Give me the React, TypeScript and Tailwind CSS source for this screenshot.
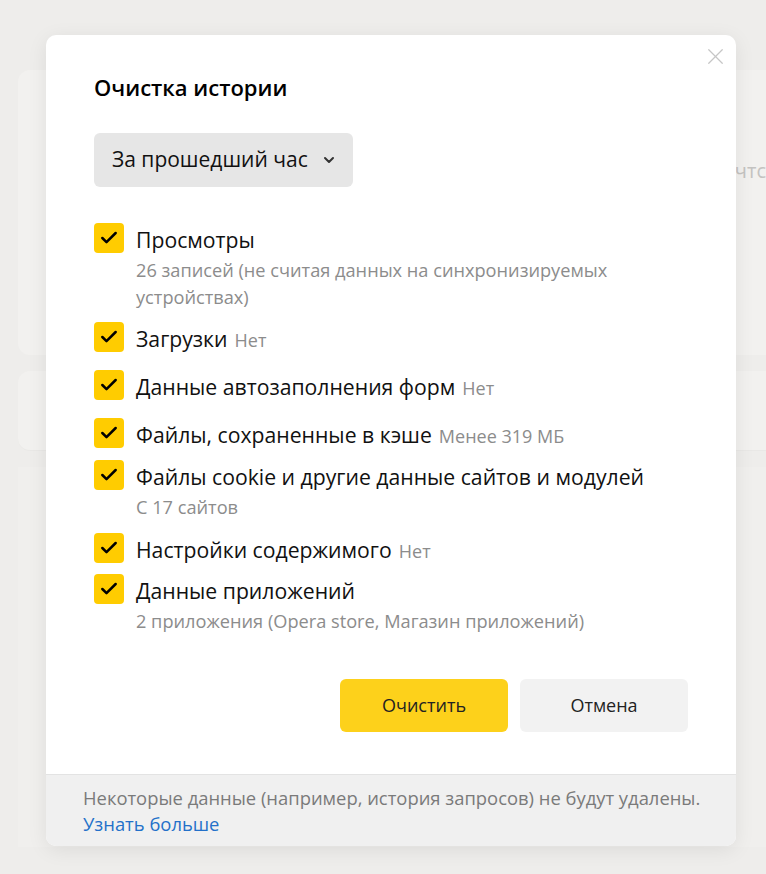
import { Check, ChevronDown, X } from "lucide-react";

type Item = { label: string; note?: string; sub?: string; gap: string };

const items: Item[] = [
  { label: "Просмотры", sub: "26 записей (не считая данных на синхронизируемых устройствах)", gap: "mt-0" },
  { label: "Загрузки", note: "Нет", gap: "mt-[11px]" },
  { label: "Данные автозаполнения форм", note: "Нет", gap: "mt-[18px]" },
  { label: "Файлы, сохраненные в кэше", note: "Менее 319 МБ", gap: "mt-[18px]" },
  { label: "Файлы cookie и другие данные сайтов и модулей", sub: "С 17 сайтов", gap: "mt-[12px]" },
  { label: "Настройки содержимого", note: "Нет", gap: "mt-[12px]" },
  { label: "Данные приложений", sub: "2 приложения (Opera store, Магазин приложений)", gap: "mt-[11px]" },
];

function Row({ item }: { item: Item }) {
  return (
    <li className={item.gap}>
      <div className="flex h-[30px] items-center gap-3">
        <span className="flex h-[30px] w-[30px] shrink-0 items-center justify-center rounded-[4px] bg-[#fc0]">
          <Check size={20} strokeWidth={3} className="text-black" />
        </span>
        <span className="pt-[3px] text-[21.2px] text-[#111]">
          {item.label}
          {item.note && <span className="ml-[7px] text-[18px] text-[#8c8c8c]">{item.note}</span>}
        </span>
      </div>
      {item.sub && (
        <p className="mt-1 pl-[42px] pr-[60px] text-[18.2px] leading-[27px] text-[#8c8c8c]">{item.sub}</p>
      )}
    </li>
  );
}

export default function App() {
  return (
    <div className="relative h-[874px] w-[766px] overflow-hidden bg-[#eeedeb] font-['Open_Sans','Noto_Sans',sans-serif]">
      {/* dimmed settings page behind the dialog */}
      <div className="flex flex-col gap-4 pl-[18px] pt-[70px]">
        <div className="flex h-[285px] rounded-l-xl bg-[#f2f1ef]">
          <div className="flex-1" />
          <span className="mt-[86px] text-[20px] text-[#c4c3c1]">чтс</span>
        </div>
        <div className="h-[80px] rounded-l-xl border-b border-[#e9e8e6] bg-[#f2f1ef]" />
        <div className="h-[380px] bg-[#f0efed]" />
      </div>

      <div className="absolute left-[46px] top-[35px] flex h-[811px] w-[690px] flex-col overflow-hidden rounded-[10px] bg-white shadow-[0_4px_20px_rgba(0,0,0,0.08)]">
        <button className="absolute right-[7px] top-[7px] flex h-[28px] w-[28px] items-center justify-center text-[#c6c6c6]">
          <X size={27} strokeWidth={1.1} />
        </button>

        <div className="flex flex-1 flex-col px-12 pt-[37px]">
          <h2 className="text-[22px] font-semibold leading-[30px] text-black">Очистка истории</h2>

          <button className="mt-[31px] flex h-[54px] w-[259px] items-center gap-[13px] rounded-[6px] bg-[#e6e6e6] pl-[18px] text-[21px] text-[#111]">
            За прошедший час
            <ChevronDown size={16} strokeWidth={3} className="text-[#333]" />
          </button>

          <ul className="mt-[36px]">
            {items.map((it) => (
              <Row key={it.label} item={it} />
            ))}
          </ul>

          <div className="mt-[44px] flex justify-end gap-3">
            <button className="h-[53px] w-[168px] rounded-[6px] bg-[#fdd11b] text-[18px] text-[#222]">Очистить</button>
            <button className="h-[53px] w-[168px] rounded-[6px] bg-[#f2f2f2] text-[18px] text-[#222]">Отмена</button>
          </div>
        </div>

        <div className="h-[72px] border-t border-[#e3e3e3] bg-[#f0f0f0] pl-[37px] pt-[10px] text-[18.4px] leading-[26px]">
          <p className="text-[#7a7a7a]">Некоторые данные (например, история запросов) не будут удалены.</p>
          <a className="text-[#2370c9]">Узнать больше</a>
        </div>
      </div>
    </div>
  );
}
